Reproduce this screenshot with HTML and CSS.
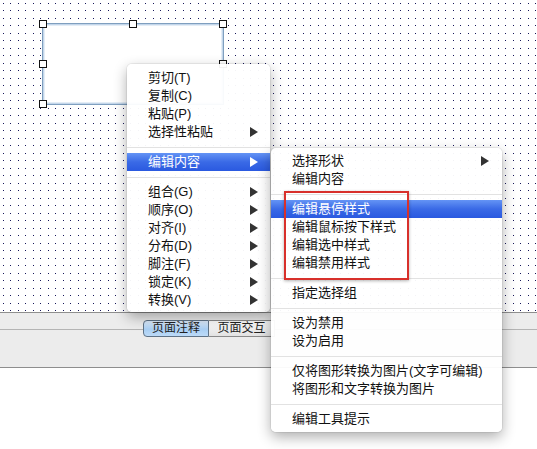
FILE: index.html
```html
<!DOCTYPE html>
<html lang="zh-CN">
<head>
  <meta charset="UTF-8" />
  <title>编辑内容</title>
  <link rel="stylesheet" href="styles.css">
</head>
<body>
  <div class="app">
    <div class="canvas">
      <div class="shape">
        <span class="handle h-tl"></span>
        <span class="handle h-tm"></span>
        <span class="handle h-tr"></span>
        <span class="handle h-ml"></span>
        <span class="handle h-mr"></span>
        <span class="handle h-bl"></span>
      </div>
    </div>

    <div class="strip">
      <div class="tabs">
        <span class="tab active">页面注释</span>
        <span class="tab">页面交互</span>
      </div>
    </div>

    <div class="blank"></div>
  </div>

  <!-- context menu -->
  <ul class="menu menu-main">
    <li class="item">剪切(T)</li>
    <li class="item">复制(C)</li>
    <li class="item">粘贴(P)</li>
    <li class="item sub">选择性粘贴</li>
    <li class="sep"></li>
    <li class="item sub hl">编辑内容</li>
    <li class="sep"></li>
    <li class="item sub">组合(G)</li>
    <li class="item sub">顺序(O)</li>
    <li class="item sub">对齐(I)</li>
    <li class="item sub">分布(D)</li>
    <li class="item sub">脚注(F)</li>
    <li class="item sub">锁定(K)</li>
    <li class="item sub">转换(V)</li>
  </ul>

  <ul class="menu menu-sub">
    <li class="item sub">选择形状</li>
    <li class="item">编辑内容</li>
    <li class="sep"></li>
    <li class="item hl">编辑悬停样式</li>
    <li class="item">编辑鼠标按下样式</li>
    <li class="item">编辑选中样式</li>
    <li class="item">编辑禁用样式</li>
    <li class="sep"></li>
    <li class="item">指定选择组</li>
    <li class="sep"></li>
    <li class="item">设为禁用</li>
    <li class="item">设为启用</li>
    <li class="sep"></li>
    <li class="item">仅将图形转换为图片(文字可编辑)</li>
    <li class="item">将图形和文字转换为图片</li>
    <li class="sep"></li>
    <li class="item">编辑工具提示</li>
  </ul>

  <div class="callout"></div>
</body>
</html>
```

FILE: styles.css
```css
* { margin: 0; padding: 0; box-sizing: border-box; }
body {
  width: 537px; height: 449px; overflow: hidden; position: relative;
  background: #fff; color: #111;
  font-family: 'Liberation Sans', 'Noto Sans CJK SC', sans-serif; font-size: 13px;
}

.app { display: flex; flex-direction: column; height: 100%; }

/* dotted canvas: 15px tile, two dots each way (7/8px steps) */
.canvas {
  height: 313px; position: relative; border-bottom: 1px solid #8e8e8e;
  background-color: #fff;
  background-image:
    radial-gradient(circle at 3.5px 3.5px, #16165a 0.7px, transparent 1px),
    radial-gradient(circle at 10.5px 3.5px, #16165a 0.7px, transparent 1px),
    radial-gradient(circle at 3.5px 10.5px, #16165a 0.7px, transparent 1px),
    radial-gradient(circle at 10.5px 10.5px, #16165a 0.7px, transparent 1px);
  background-size: 15px 15px;
}

.shape {
  position: absolute; left: 42px; top: 23px; width: 182px; height: 82px;
  background: #fff; border: 1px solid #7f9fbf;
  box-shadow: inset 0 0 0 1px #c3d6ea, inset 0 0 0 2px #e4edf6;
}
.handle {
  position: absolute; width: 8px; height: 8px;
  background: #fff; border: 1px solid #111;
}
.h-tl { left: -4px; top: -4px; }
.h-tm { left: 86px; top: -4px; }
.h-tr { right: -4px; top: -4px; }
.h-ml { left: -4px; top: 36px; }
.h-mr { right: -4px; top: 36px; }
.h-bl { left: -4px; bottom: -4px; }

/* bottom panel */
.strip {
  height: 55px; background: #ececec; border-bottom: 1px solid #8e8e8e;
  padding: 7px 0 0 143px; position: relative;
}
.strip::before {
  content: ''; position: absolute; left: 0; right: 0; top: 16px;
  border-top: 1px solid #b4b4b4;
}
.tabs { display: flex; position: relative; }
.tab {
  width: 66px; height: 17px; line-height: 15px; text-align: center; font-size: 12px;
  background: linear-gradient(#fdfdfd, #e2e2e2); border: 1px solid #8a8a8a; border-left: none;
  color: #222;
}
.tab.active {
  background: linear-gradient(#dcebfb, #a9cff4 55%, #bcdaf7);
  border: 1px solid #5f7387; border-radius: 4px 0 0 4px;
}
.blank { flex: 1; }

/* menus */
.menu {
  position: absolute; list-style: none;
  background: rgba(255, 255, 255, 0.95); border-radius: 5px;
  box-shadow: 0 0 0 1px rgba(0, 0, 0, 0.06), 0 5px 14px rgba(0, 0, 0, 0.32);
}
.menu-main { left: 127px; top: 64px; width: 143px; padding: 5px 0 3px; }
.menu-sub { left: 271px; top: 148px; width: 231px; padding: 4px 0; }

.item {
  height: 18px; line-height: 18px; padding-left: 21px; position: relative; white-space: nowrap;
}
.item.sub::after {
  content: ''; position: absolute; right: 12px; top: 4px;
  border-left: 8px solid #333; border-top: 5px solid transparent; border-bottom: 5px solid transparent;
}
.menu-sub .item.sub::after { right: 13px; }
.item.hl { background: linear-gradient(#6494f5, #3a6ae6 50%, #2a59e0); color: #fff; }
.item.hl.sub::after { border-left-color: #fff; }

.sep { height: 12px; position: relative; }
.sep::after {
  content: ''; position: absolute; left: 0; right: 0; top: 6px;
  border-top: 1px solid #e2e2e2;
}

/* highlight box drawn over the submenu */
.callout {
  position: absolute; left: 284px; top: 191px; width: 125px; height: 89px;
  border: 2px solid #d8302b; box-shadow: 0 1px 3px rgba(0, 0, 0, 0.3);
}
```
